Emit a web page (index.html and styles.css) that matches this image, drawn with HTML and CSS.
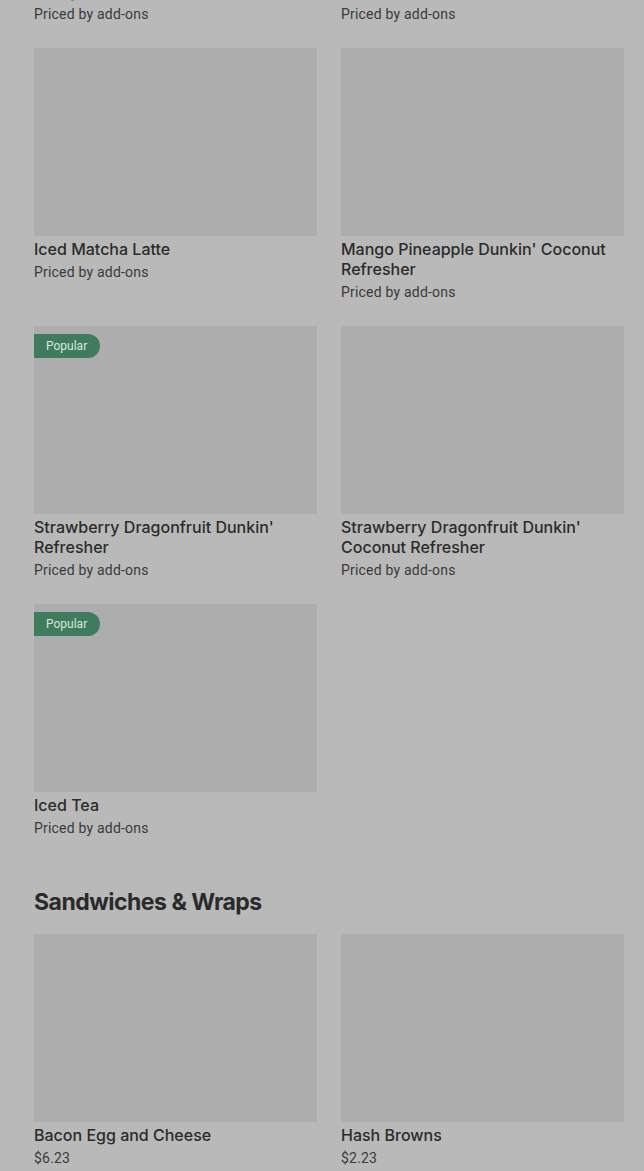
FILE: index.html
```html
<!DOCTYPE html>
<html>
<head>
<meta charset="utf-8">
<link rel="stylesheet" href="styles.css">
</head>
<body>
<main class="page">
  <section class="grid grid-first">
    <div class="card">
      <div class="title">Mango Pineapple Coolatta</div>
      <div class="sub">Priced by add-ons</div>
    </div>
    <div class="card">
      <div class="title">Frozen Coffee</div>
      <div class="sub">Priced by add-ons</div>
    </div>
    <div class="card">
      <div class="thumb"></div>
      <div class="title">Iced Matcha Latte</div>
      <div class="sub">Priced by add-ons</div>
    </div>
    <div class="card">
      <div class="thumb"></div>
      <div class="title">Mango Pineapple Dunkin' Coconut Refresher</div>
      <div class="sub">Priced by add-ons</div>
    </div>
    <div class="card">
      <div class="thumb"><span class="badge">Popular</span></div>
      <div class="title">Strawberry Dragonfruit Dunkin' Refresher</div>
      <div class="sub">Priced by add-ons</div>
    </div>
    <div class="card">
      <div class="thumb"></div>
      <div class="title">Strawberry Dragonfruit Dunkin' Coconut Refresher</div>
      <div class="sub">Priced by add-ons</div>
    </div>
    <div class="card">
      <div class="thumb"><span class="badge">Popular</span></div>
      <div class="title">Iced Tea</div>
      <div class="sub">Priced by add-ons</div>
    </div>
  </section>
  <h2 class="heading">Sandwiches &amp; Wraps</h2>
  <section class="grid">
    <div class="card">
      <div class="thumb"></div>
      <div class="title">Bacon Egg and Cheese</div>
      <div class="sub">$6.23</div>
    </div>
    <div class="card">
      <div class="thumb"></div>
      <div class="title">Hash Browns</div>
      <div class="sub">$2.23</div>
    </div>
  </section>
</main>
</body>
</html>
```
FILE: styles.css
```css
html, body {
  margin: 0;
  padding: 0;
  background: #b9b9b9;
  overflow: hidden;
}
body {
  font-family: Roboto, "Liberation Sans", sans-serif;
  color: #2b2b2b;
}
.page {
  padding: 0 20px 0 34px;
  margin-top: -19px;
}
.grid {
  display: grid;
  grid-template-columns: 283px 283px;
  column-gap: 24px;
  row-gap: 24px;
  align-items: start;
}
.card {
  display: flex;
  flex-direction: column;
}
.thumb {
  position: relative;
  height: 188px;
  background: #adadad;
  margin-bottom: 3px;
}
.badge {
  position: absolute;
  left: 0;
  top: 8px;
  height: 24px;
  line-height: 24px;
  padding: 0 13px 0 12px;
  background: #3f7c5e;
  color: #d9e6df;
  font-size: 12px;
  border-radius: 0 12px 12px 0;
}
.title {
  font-family: Inter, Roboto, sans-serif;
  font-size: 16px;
  line-height: 20px;
  font-weight: 500;
  color: #2b2b2b;
}
.sub {
  margin-top: 3px;
  font-size: 14px;
  line-height: 20px;
  letter-spacing: 0.2px;
  color: #3a3a3a;
}
.heading {
  margin: 48px 0 16px 0;
  font-family: Inter, "Liberation Sans", sans-serif;
  font-size: 23px;
  line-height: 32px;
  font-weight: 700;
  letter-spacing: -0.5px;
  color: #2a2a2a;
}
```
